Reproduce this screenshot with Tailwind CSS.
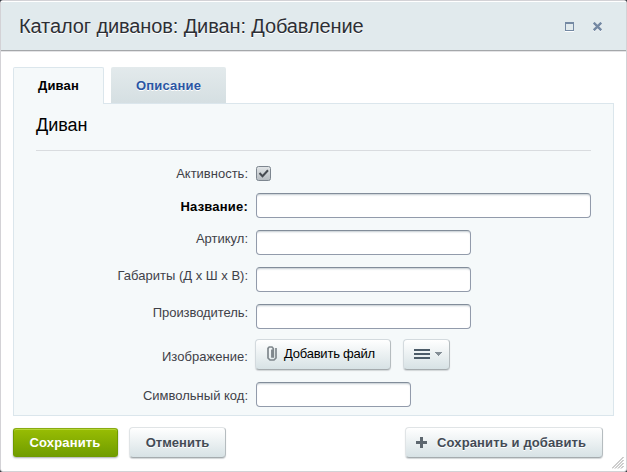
<!DOCTYPE html>
<html lang="ru">
<head>
<meta charset="utf-8">
<title>Каталог диванов: Диван: Добавление</title>
<script src="https://cdn.jsdelivr.net/npm/@tailwindcss/browser@4"></script>
</head>
<body class="bg-[#3c4148] font-['Liberation_Sans',Arial,sans-serif] text-[13px] text-[#3f4148] overflow-hidden">
<div class="relative flex h-[472px] w-[627px] flex-col rounded-[3px] border border-[#d3d2d6] bg-white">
  <header class="flex h-[50px] shrink-0 items-center border-t border-b border-t-white border-b-[#a4a7aa] bg-[#e1eaed] pl-[18px] pr-[24px] shadow-[0_1px_0_#e4e4e6]">
    <h1 class="grow whitespace-nowrap text-[20px] leading-6 tracking-[-0.11px] text-[#2d2f35] [text-shadow:0_1px_0_#fff]">Каталог диванов: Диван: Добавление</h1>
    <svg class="mt-[2px] mr-[19px] h-[10px] w-[9px]" viewBox="0 0 9 10" shape-rendering="crispEdges"><path fill="#fff" d="M0 9h9v1H0z"/><path fill="#7489a3" fill-rule="evenodd" d="M0 0h9v9H0zM1 2v6h7V2z"/></svg>
    <svg class="mt-[2px] h-[10px] w-[9px]" viewBox="0 0 9 10"><path d="M.7 1.700l7.600 7.600M8.300 1.700L.7 9.300" stroke="#fff" stroke-width="2"/><path d="M.7.7l7.600 7.600M8.300.7L.7 8.300" stroke="#7489a3" stroke-width="2.400"/></svg>
  </header>

  <nav class="mt-[16px] flex h-[36px] shrink-0 gap-[7px] pl-[12px] text-[13px] font-bold">
    <div class="z-10 flex h-[37px] w-[91px] items-center justify-center rounded-t-[2px] border border-b-0 border-[#dbe6ec] bg-[#f5f9fa] tracking-[0.2px] text-black">Диван</div>
    <div class="flex w-[115px] items-center justify-center rounded-t-[2px] bg-linear-to-b from-[#e3eaec] to-[#d5dfe2] pt-px tracking-[0.2px] text-[#2a56a4] [text-shadow:0_1px_0_#fff]">Описание</div>
  </nav>

  <main class="mx-[12px] h-[313px] w-[601px] shrink-0 border border-[#dbe6ec] bg-[#f5f9fa] px-[22px]">
    <h2 class="h-[47px] border-b border-[#d9dcdf] pt-[9px] text-[18px] leading-6 text-black">Диван</h2>
    <div class="grid grid-cols-[212px_335px] gap-x-[8px] pt-[11px] text-right leading-4">
      <label class="h-[31px] pt-[4px]">Активность:</label>
      <div class="pt-[4px]">
        <svg class="block h-[15px] w-[15px]" viewBox="0 0 15 15"><defs><linearGradient id="cb" x1="0" y1="0" x2="0" y2="1"><stop offset="0" stop-color="#e2e6e8"/><stop offset="1" stop-color="#b5bbc0"/></linearGradient></defs><rect x=".5" y=".5" width="14" height="14" rx="2" fill="url(#cb)" stroke="#7d868f"/><path d="M3.500 7l3 3.200L12 4.300" fill="none" stroke="#474c52" stroke-width="2"/></svg>
      </div>
      <label class="h-[37px] pt-[6px] font-bold tracking-[0.2px] text-black">Название:</label>
      <div class="h-[25px] rounded-[4px] border border-[#929bab] border-t-[#828d9a] bg-white shadow-[inset_0_2px_2px_-1px_#c3cbd0]"></div>
      <label class="h-[37px] pt-[1px]">Артикул:</label>
      <div class="h-[25px] w-[215px] rounded-[4px] border border-[#929bab] border-t-[#828d9a] bg-white shadow-[inset_0_2px_2px_-1px_#c3cbd0]"></div>
      <label class="h-[37px] pt-[1px]">Габариты (Д x Ш x В):</label>
      <div class="h-[25px] w-[215px] rounded-[4px] border border-[#929bab] border-t-[#828d9a] bg-white shadow-[inset_0_2px_2px_-1px_#c3cbd0]"></div>
      <label class="h-[35px] pt-[1px] tracking-[-0.07px]">Производитель:</label>
      <div class="h-[25px] w-[215px] rounded-[4px] border border-[#929bab] border-t-[#828d9a] bg-white shadow-[inset_0_2px_2px_-1px_#c3cbd0]"></div>
      <label class="h-[43px] pt-[10px] tracking-[0.05px]">Изображение:</label>
      <div class="flex gap-[13px]">
        <button class="-ml-px flex h-[31px] w-[136px] items-center rounded-[4px] border border-[#d3dade] border-b-[#a5abae] border-r-[#b5bcbf] bg-linear-to-b from-white to-[#d7e2e5] pl-[11px] text-black shadow-[0_1px_1px_#d2d6d8]">
          <svg class="mr-[7px] h-[15px] w-[10px] shrink-0 -translate-y-px" viewBox="0 0 10 15" fill="none"><path fill="#a9b1b5" d="M4 4h2v7H4z"/><path stroke="#7f878c" stroke-width="1.700" d="M5 3.500v7.300h1.300V2.500L5 1H2.200L1 2.300V12l2 2h4l2-2V2"/></svg>
          <span class="-translate-y-px tracking-[-0.22px] whitespace-nowrap">Добавить файл</span>
        </button>
        <button class="-ml-px flex h-[31px] w-[47px] items-center rounded-[4px] border border-[#d3dade] border-b-[#a5abae] border-r-[#b5bcbf] bg-linear-to-b from-white to-[#d7e2e5] pl-[10px] shadow-[0_1px_1px_#d2d6d8]">
          <svg class="h-[10px] w-[28px] -translate-y-px" viewBox="0 0 28 10" shape-rendering="crispEdges"><path fill="#4c5b68" d="M0 0h16v2H0zM0 4h16v2H0zM0 8h16v2H0z"/><path fill="#848e96" d="M21 3h7v1h-1v1h-1v1h-1v1h-1V6h-1V5h-1V4h-1z"/></svg>
        </button>
      </div>
      <label class="pt-[6px]">Символьный код:</label>
      <div class="h-[25px] w-[155px] rounded-[4px] border border-[#929bab] border-t-[#828d9a] bg-white shadow-[inset_0_2px_2px_-1px_#c3cbd0]"></div>
    </div>
  </main>

  <footer class="mt-[11px] flex pl-[12px] pr-[23px] text-[13px] font-bold text-[#434b55]">
    <button class="mt-px h-[29px] w-[105px] rounded-[3px] border border-[#6f9a00] border-t-[#89ab12] bg-linear-to-b from-[#98bd04] to-[#719d00] pr-px tracking-[0.15px] text-white shadow-[inset_0_1px_0_#b5d536,0_1px_2px_#a8acae]">Сохранить</button>
    <button class="ml-[11px] h-[31px] w-[97px] rounded-[4px] border border-[#e0e4e6] border-b-[#a5abae] border-r-[#b5bcbf] bg-linear-to-b from-white to-[#d7e2e5] shadow-[0_1px_1px_#d2d6d8] [text-shadow:0_1px_0_#fff]">Отменить</button>
    <button class="ml-auto flex h-[31px] w-[198px] items-center rounded-[4px] border border-[#e0e4e6] border-b-[#a5abae] border-r-[#b5bcbf] bg-linear-to-b from-white to-[#d7e2e5] pl-[10px] shadow-[0_1px_1px_#d2d6d8] [text-shadow:0_1px_0_#fff]">
      <svg class="mr-[10px] h-[11px] w-[11px]" viewBox="0 0 11 11"><path fill="#5d676f" d="M4 0h3v4h4v3H7v4H4V7H0V4h4z"/></svg>
      <span class="tracking-[0.13px] whitespace-nowrap">Сохранить и добавить</span>
    </button>
  </footer>
  <svg class="absolute right-[2px] bottom-[2px] h-[12px] w-[12px]" viewBox="0 0 12 12" stroke="#9b9b9b" stroke-width="1"><path d="M0 11.500L11.500 0M3 11.500L11.500 3M6 11.500L11.500 6M9 11.500L11.500 9"/></svg>
</div>
</body>
</html>
